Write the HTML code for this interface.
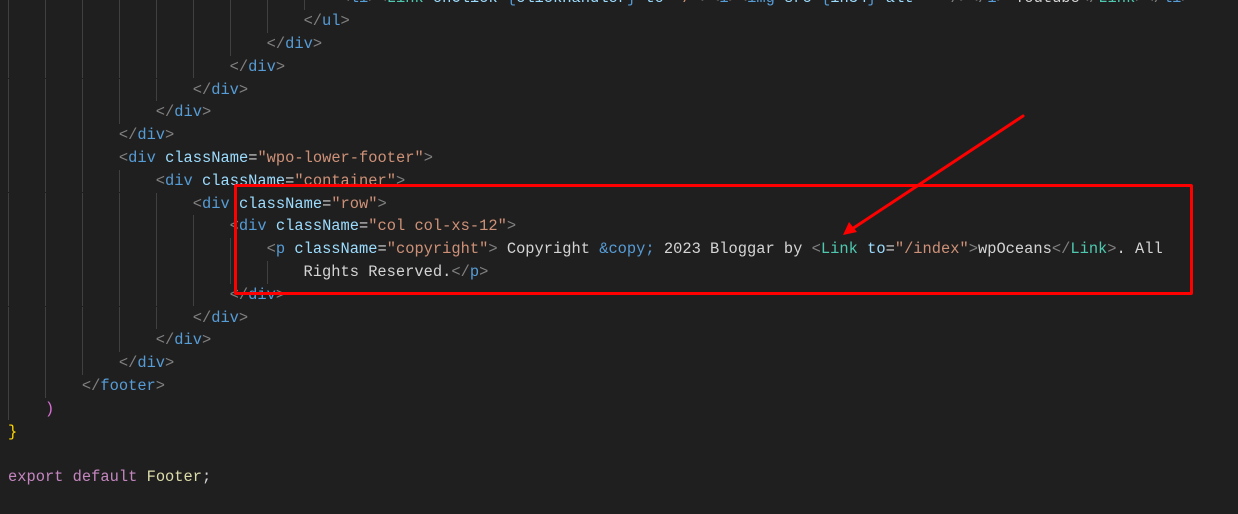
<!DOCTYPE html>
<html><head><meta charset="utf-8"><style>
html,body{margin:0;padding:0;background:#1f1f1f;width:1238px;height:514px;overflow:hidden;position:relative}
#w{position:absolute;left:0;top:1.5px;width:1238px;height:514px}
.l{position:absolute;left:8px;height:22.8px;line-height:22.8px;font-family:"Liberation Mono",monospace;font-size:15.4px;white-space:pre;color:#d4d4d4}
.g{position:absolute;left:8px;height:22.8px;background:repeating-linear-gradient(to right,#404040 0 1px,transparent 1px 37px)}
.p{color:#808080}.t{color:#569cd6}.a{color:#9cdcfe}.s{color:#ce9178}.c{color:#4ec9b0}.k{color:#c586c0}.f{color:#dcdcaa}.y{color:#ffd700}.m{color:#da70d6}.b{color:#569cd6}
</style></head><body>
<div id="w">
<div class="g" style="top:-14.2px;width:297px"></div>
<div class="l" style="top:-14.2px">                                    <span class="p">&lt;</span><span class="t">li</span><span class="p">&gt;&lt;</span><span class="c">Link</span> <span class="a">onClick</span>=<span class="b">{</span><span class="a">clickHandler</span><span class="b">}</span> <span class="a">to</span>=<span class="s">"/"</span><span class="p">&gt;&lt;</span><span class="t">i</span><span class="p">&gt;&lt;</span><span class="t">img</span> <span class="a">src</span>=<span class="b">{</span><span class="a">in34</span><span class="b">}</span> <span class="a">alt</span>=<span class="s">""</span> <span class="p">/&gt;&lt;/</span><span class="t">i</span><span class="p">&gt;</span> Youtube<span class="p">&lt;/</span><span class="c">Link</span><span class="p">&gt;&lt;/</span><span class="t">li</span><span class="p">&gt;</span></div>
<div class="g" style="top:8.6px;width:260px"></div>
<div class="l" style="top:8.6px">                                <span class="p">&lt;/</span><span class="t">ul</span><span class="p">&gt;</span></div>
<div class="g" style="top:31.4px;width:223px"></div>
<div class="l" style="top:31.4px">                            <span class="p">&lt;/</span><span class="t">div</span><span class="p">&gt;</span></div>
<div class="g" style="top:54.2px;width:186px"></div>
<div class="l" style="top:54.2px">                        <span class="p">&lt;/</span><span class="t">div</span><span class="p">&gt;</span></div>
<div class="g" style="top:77px;width:149px"></div>
<div class="l" style="top:77px">                    <span class="p">&lt;/</span><span class="t">div</span><span class="p">&gt;</span></div>
<div class="g" style="top:99.8px;width:112px"></div>
<div class="l" style="top:99.8px">                <span class="p">&lt;/</span><span class="t">div</span><span class="p">&gt;</span></div>
<div class="g" style="top:122.6px;width:75px"></div>
<div class="l" style="top:122.6px">            <span class="p">&lt;/</span><span class="t">div</span><span class="p">&gt;</span></div>
<div class="g" style="top:145.4px;width:75px"></div>
<div class="l" style="top:145.4px">            <span class="p">&lt;</span><span class="t">div</span> <span class="a">className</span>=<span class="s">"wpo-lower-footer"</span><span class="p">&gt;</span></div>
<div class="g" style="top:168.2px;width:112px"></div>
<div class="l" style="top:168.2px">                <span class="p">&lt;</span><span class="t">div</span> <span class="a">className</span>=<span class="s">"container"</span><span class="p">&gt;</span></div>
<div class="g" style="top:191px;width:149px"></div>
<div class="l" style="top:191px">                    <span class="p">&lt;</span><span class="t">div</span> <span class="a">className</span>=<span class="s">"row"</span><span class="p">&gt;</span></div>
<div class="g" style="top:213.8px;width:186px"></div>
<div class="l" style="top:213.8px">                        <span class="p">&lt;</span><span class="t">div</span> <span class="a">className</span>=<span class="s">"col col-xs-12"</span><span class="p">&gt;</span></div>
<div class="g" style="top:236.6px;width:223px"></div>
<div class="l" style="top:236.6px">                            <span class="p">&lt;</span><span class="t">p</span> <span class="a">className</span>=<span class="s">"copyright"</span><span class="p">&gt;</span> Copyright <span class="t">&amp;copy;</span> 2023 Bloggar by <span class="p">&lt;</span><span class="c">Link</span> <span class="a">to</span>=<span class="s">"/index"</span><span class="p">&gt;</span>wpOceans<span class="p">&lt;/</span><span class="c">Link</span><span class="p">&gt;</span>. All</div>
<div class="g" style="top:259.4px;width:260px"></div>
<div class="l" style="top:259.4px">                                Rights Reserved.<span class="p">&lt;/</span><span class="t">p</span><span class="p">&gt;</span></div>
<div class="g" style="top:282.2px;width:186px"></div>
<div class="l" style="top:282.2px">                        <span class="p">&lt;/</span><span class="t">div</span><span class="p">&gt;</span></div>
<div class="g" style="top:305px;width:149px"></div>
<div class="l" style="top:305px">                    <span class="p">&lt;/</span><span class="t">div</span><span class="p">&gt;</span></div>
<div class="g" style="top:327.8px;width:112px"></div>
<div class="l" style="top:327.8px">                <span class="p">&lt;/</span><span class="t">div</span><span class="p">&gt;</span></div>
<div class="g" style="top:350.6px;width:75px"></div>
<div class="l" style="top:350.6px">            <span class="p">&lt;/</span><span class="t">div</span><span class="p">&gt;</span></div>
<div class="g" style="top:373.4px;width:38px"></div>
<div class="l" style="top:373.4px">        <span class="p">&lt;/</span><span class="t">footer</span><span class="p">&gt;</span></div>
<div class="g" style="top:396.2px;width:1px"></div>
<div class="l" style="top:396.2px">    <span class="m">)</span></div>
<div class="l" style="top:419px"><span class="y">}</span></div>
<div class="l" style="top:464.6px"><span class="k">export</span> <span class="k">default</span> <span class="f">Footer</span>;</div>
</div>
<div style="position:absolute;left:234px;top:184px;width:953px;height:105px;border:3px solid #ff0000;border-radius:2px"></div>
<svg width="1238" height="514" style="position:absolute;left:0;top:0">
<line x1="1023" y1="116" x2="852" y2="229" stroke="#ff0000" stroke-width="3" stroke-linecap="round"/>
<polygon points="843,235 849,222 857,232" fill="#ff0000"/>
</svg>
</body></html>
